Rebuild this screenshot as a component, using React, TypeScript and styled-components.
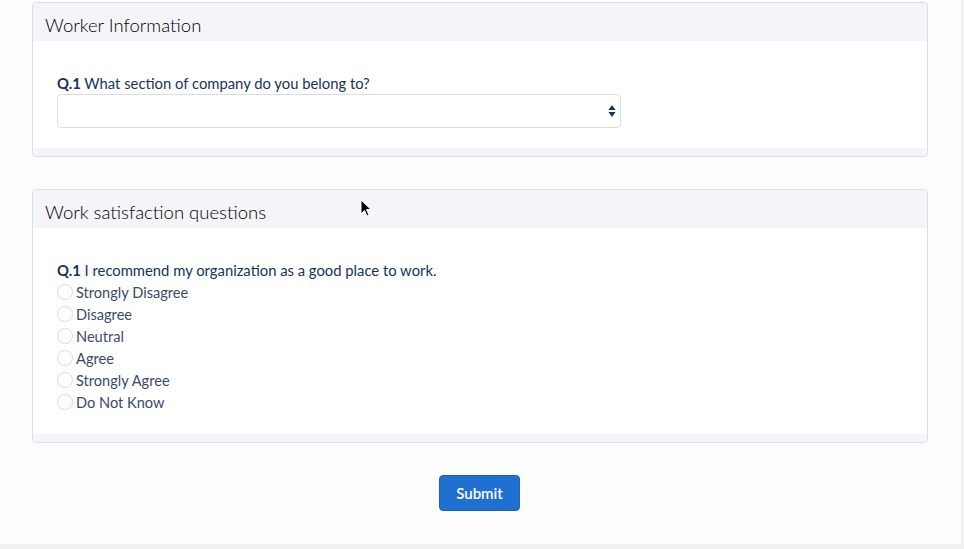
import React from "react";
import styled, { createGlobalStyle } from "styled-components";

const Global = createGlobalStyle`
  html, body { margin: 0; padding: 0; background: #f1f1f4; }
  body { font-family: Lato, "Open Sans", sans-serif; width: 964px; height: 549px; overflow: hidden; }
`;

const Page = styled.div`
  position: relative;
  width: 961px;
  height: 544px;
  background: #fdfdfd;
  box-sizing: border-box;
  padding: 2px 33px 0 32px;
  display: flex;
  flex-direction: column;
  gap: 32px;
`;

const Card = styled.section`
  border: 1px solid #d8dde6;
  border-radius: 4px;
  background: #fff;
  overflow: hidden;
  display: flex;
  flex-direction: column;
`;

const CardHeader = styled.header`
  height: 38px;
  box-sizing: border-box;
  background: #f4f4f9;
  padding: 5px 12px 0;
  display: flex;
  align-items: center;
  font-size: 18.5px;
  font-weight: 300;
  color: #000;
`;

const CardBody = styled.div<{ $padBottom?: number }>`
  padding: 31px 24px ${(p) => p.$padBottom ?? 20}px;
  display: flex;
  flex-direction: column;
`;

const CardFooter = styled.div`
  height: 8px;
  background: #f4f4f9;
`;

const Question = styled.div`
  font-size: 14.8px;
  line-height: 22px;
  color: #16325c;
`;

const QNum = styled.b`
  font-weight: 700;
`;

const SelectBox = styled.div`
  width: 564px;
  height: 34px;
  box-sizing: border-box;
  border: 1px solid #d8dde6;
  border-radius: 4px;
  background: #fff;
  display: flex;
  align-items: center;
  justify-content: flex-end;
  padding-right: 4px;
`;

const OptionRow = styled.label`
  display: flex;
  align-items: center;
  height: 22px;
  font-size: 14.6px;
  color: #3b4a6b;
  gap: 3px;
`;

const Radio = styled.span`
  width: 16px;
  height: 16px;
  border: 1px solid #d8dde6;
  border-radius: 50%;
  background: #fff;
  box-sizing: border-box;
`;

const Actions = styled.div`
  display: flex;
  justify-content: center;
  padding-right: 1px;
`;

const SubmitButton = styled.button`
  width: 81px;
  height: 36px;
  border: 1px solid #1d63b8;
  border-radius: 4px;
  background: #1f70d0;
  color: #fff;
  font-family: Lato, "Open Sans", sans-serif;
  font-size: 15px;
  font-weight: 600;
  cursor: pointer;
`;

const Cursor = styled.svg`
  position: absolute;
  left: 360px;
  top: 199px;
`;

const options = [
  "Strongly Disagree",
  "Disagree",
  "Neutral",
  "Agree",
  "Strongly Agree",
  "Do Not Know",
];

export default function App() {
  return (
    <>
      <Global />
      <Page>
        <Card>
          <CardHeader>Worker Information</CardHeader>
          <CardBody>
            <Question>
              <QNum>Q.1</QNum> What section of company do you belong to?
            </Question>
            <SelectBox>
              <svg width="8" height="14" viewBox="0 0 8 14">
                <path d="M4 1 L7.5 6 L0.5 6 Z" fill="#16325c" />
                <path d="M4 13 L7.5 8 L0.5 8 Z" fill="#16325c" />
              </svg>
            </SelectBox>
          </CardBody>
          <CardFooter />
        </Card>
        <Card>
          <CardHeader>Work satisfaction questions</CardHeader>
          <CardBody $padBottom={21}>
            <Question>
              <QNum>Q.1</QNum> I recommend my organization as a good place to work.
            </Question>
            {options.map((o) => (
              <OptionRow key={o}>
                <Radio />
                {o}
              </OptionRow>
            ))}
          </CardBody>
          <CardFooter />
        </Card>
        <Actions>
          <SubmitButton>Submit</SubmitButton>
        </Actions>
        <Cursor width="13" height="19" viewBox="0 0 13 19">
          <path
            d="M1 1 L1 15 L4.5 11.5 L7 17 L9 16 L6.5 10.5 L11 10.5 Z"
            fill="#000"
            stroke="#fff"
            strokeWidth="1"
            strokeLinejoin="round"
          />
        </Cursor>
      </Page>
    </>
  );
}
